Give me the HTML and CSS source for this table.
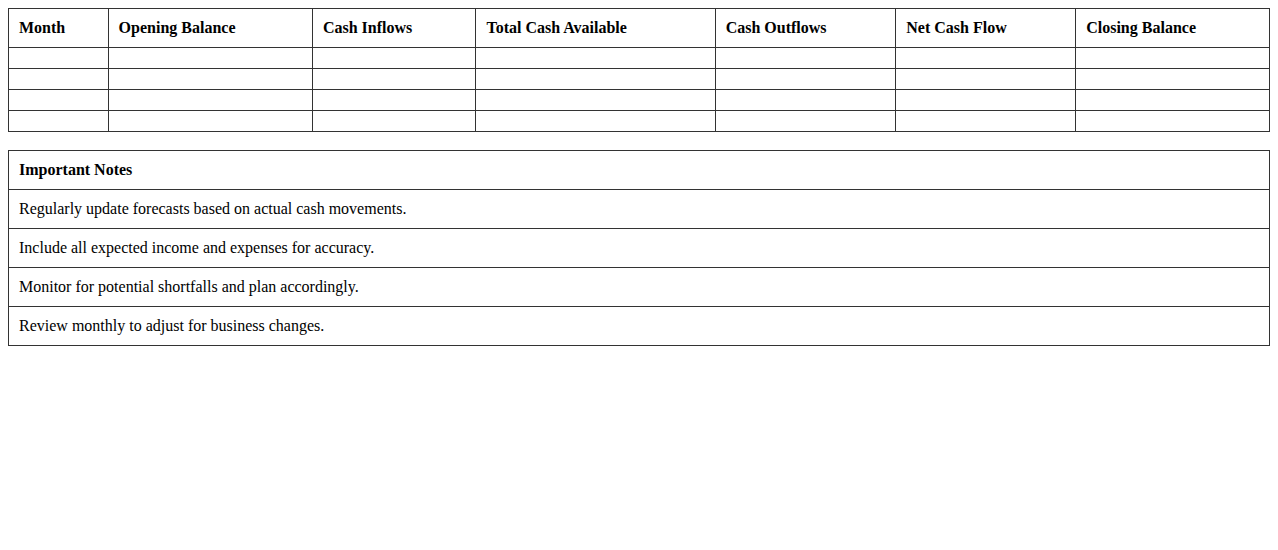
FILE: index.html
```html
<!DOCTYPE html>
<html>
<head>
<meta charset="utf-8">
<link rel="stylesheet" href="styles.css">
</head>
<body>
<table class="grid">
  <thead>
    <tr>
      <th>Month</th>
      <th>Opening Balance</th>
      <th>Cash Inflows</th>
      <th>Total Cash Available</th>
      <th>Cash Outflows</th>
      <th>Net Cash Flow</th>
      <th>Closing Balance</th>
    </tr>
  </thead>
  <tbody>
    <tr><td></td><td></td><td></td><td></td><td></td><td></td><td></td></tr>
    <tr><td></td><td></td><td></td><td></td><td></td><td></td><td></td></tr>
    <tr><td></td><td></td><td></td><td></td><td></td><td></td><td></td></tr>
    <tr><td></td><td></td><td></td><td></td><td></td><td></td><td></td></tr>
  </tbody>
</table>
<table class="grid notes">
  <thead>
    <tr><th>Important Notes</th></tr>
  </thead>
  <tbody>
    <tr><td>Regularly update forecasts based on actual cash movements.</td></tr>
    <tr><td>Include all expected income and expenses for accuracy.</td></tr>
    <tr><td>Monitor for potential shortfalls and plan accordingly.</td></tr>
    <tr><td>Review monthly to adjust for business changes.</td></tr>
  </tbody>
</table>
</body>
</html>
```
FILE: styles.css
```css
body {
  margin: 8px;
  font-family: "Liberation Serif", "Times New Roman", serif;
  font-size: 16px;
  color: #000;
  background: #fff;
}
.grid {
  width: 100%;
  border-collapse: collapse;
}
.grid th,
.grid td {
  border: 1px solid #333;
  padding: 10px;
  text-align: left;
}
.grid th {
  font-weight: bold;
}
.notes {
  margin-top: 18px;
}
```
